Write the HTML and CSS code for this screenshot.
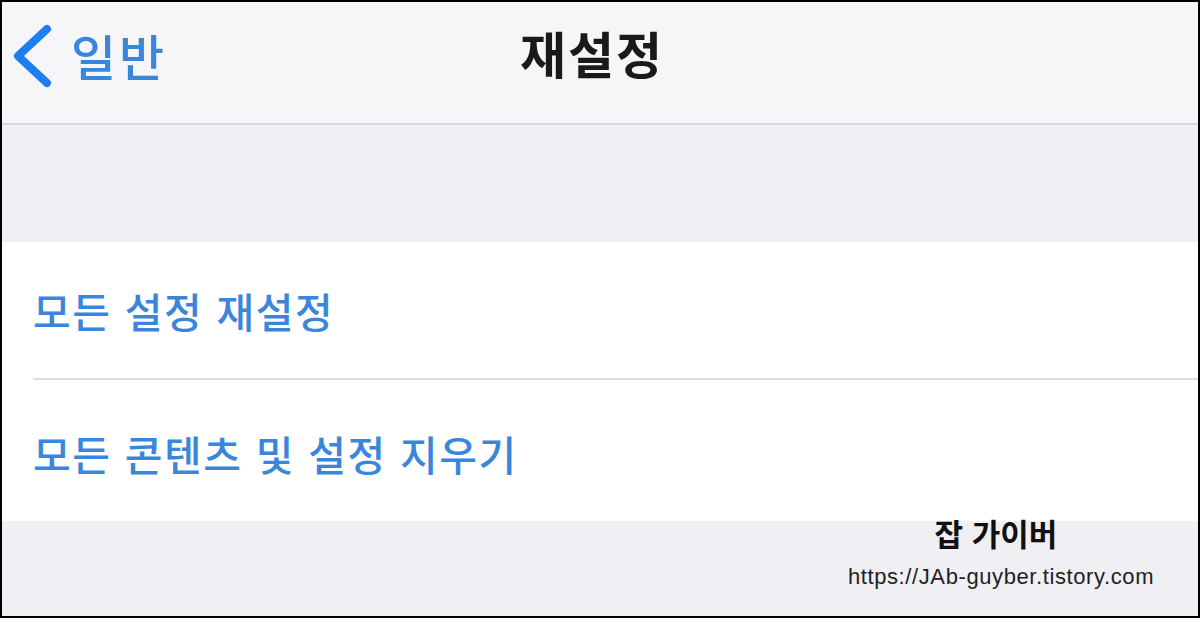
FILE: index.html
```html
<!DOCTYPE html>
<html lang="ko">
<head>
<meta charset="utf-8">
<link rel="stylesheet" href="styles.css">
</head>
<body>
<div class="frame">
  <header class="nav">
    <div class="back">
      <svg class="chev" width="44" height="66" viewBox="0 0 44 66">
        <polyline points="37,6 8,33 37,60" fill="none" stroke="#1c7ef0" stroke-width="8" stroke-linecap="round" stroke-linejoin="round"/>
      </svg>
      <span class="back-label">일반</span>
    </div>
    <h1 class="title">재설정</h1>
    <div class="spacer"></div>
  </header>
  <div class="gap"></div>
  <section class="group">
    <div class="row"><span class="row-label">모든 설정 재설정</span></div>
    <div class="row"><span class="row-label">모든 콘텐츠 및 설정 지우기</span></div>
  </section>
  <div class="footer">
    <div class="watermark">
      <div class="wm-title">잡 가이버</div>
      <div class="wm-url">https://JAb-guyber.tistory.com</div>
    </div>
  </div>
</div>
</body>
</html>
```
FILE: styles.css
```css
* { box-sizing: border-box; }
html, body { margin: 0; padding: 0; }
body {
  width: 1200px;
  height: 618px;
  overflow: hidden;
  font-family: "Noto Sans CJK KR", "Noto Sans", sans-serif;
  background: #000;
}
.frame {
  width: 1200px;
  height: 618px;
  border: 2px solid #000;
  background: #efeff4;
  display: flex;
  flex-direction: column;
  position: relative;
}
.nav {
  height: 123px;
  background: #f6f6f8;
  border-bottom: 2px solid #d9d9dd;
  display: grid;
  grid-template-columns: 1fr auto 1fr;
  align-items: start;
  padding-top: 18px;
}
.back {
  display: flex;
  align-items: center;
  padding-left: 8px;
  gap: 17px;
  color: #3a86da;
}
.chev { display: block; margin-top: 2px; }
.back-label {
  font-size: 49px;
  font-weight: 500;
  line-height: 70px;
  letter-spacing: 3px;
}
.title {
  margin: -3px 16px 0 0;
  font-size: 50px;
  font-weight: 700;
  line-height: 70px;
  color: #1a1a1a;
  letter-spacing: 2px;
}
.gap { height: 117px; }
.group {
  background: #fff;
  height: 279px;
  display: flex;
  flex-direction: column;
}
.row {
  flex: 1;
  margin-left: 31px;
  display: flex;
  align-items: center;
}
.row + .row { border-top: 2px solid #dcdcdf; }
.row:last-child { padding-top: 6px; }
.row-label {
  font-size: 41px;
  font-weight: 500;
  color: #3a86da;
  letter-spacing: 1.6px;
}
.footer { flex: 1; position: relative; }
.watermark {
  position: absolute;
  left: 840px;
  top: -7px;
  width: 318px;
  display: flex;
  flex-direction: column;
  align-items: center;
}
.wm-title {
  font-size: 31px;
  font-weight: 700;
  color: #111;
  line-height: 38px;
  margin-right: 10px;
}
.wm-url {
  font-family: "Liberation Sans", "Noto Sans", sans-serif;
  font-size: 22px;
  color: #222;
  line-height: 26px;
  margin-top: 12px;
  letter-spacing: 0.6px;
}
```
